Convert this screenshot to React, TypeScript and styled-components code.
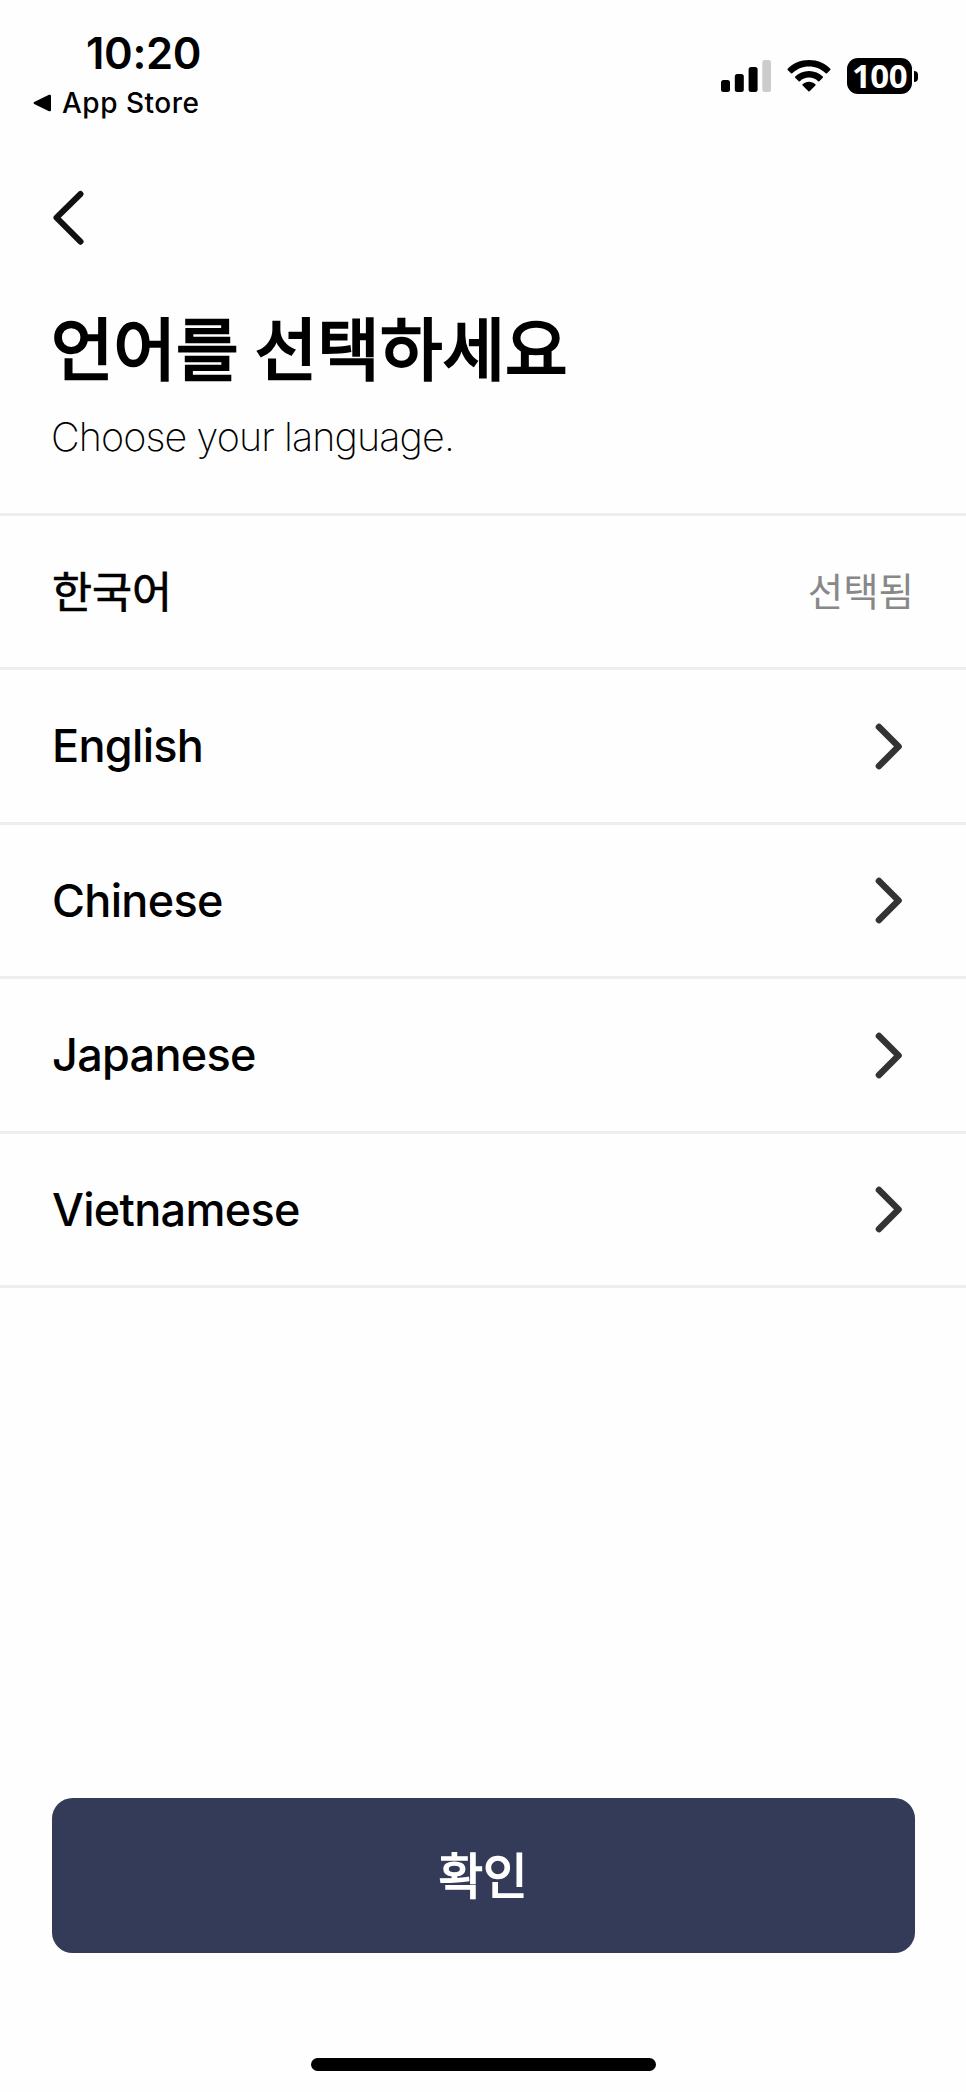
import React from "react";
import styled, { createGlobalStyle } from "styled-components";

const GlobalStyle = createGlobalStyle`
  * { box-sizing: border-box; }
  body { margin: 0; background: #fefefe; }
`;

const Screen = styled.main`
  width: 966px;
  height: 2092px;
  display: flex;
  flex-direction: column;
  background: #fefefe;
  color: #000;
  font-family: Inter, "Noto Sans CJK KR", sans-serif;
  white-space: nowrap;
  overflow: hidden;
`;

const StatusBar = styled.header`
  height: 152px;
  display: flex;
  justify-content: space-between;
  padding: 27px 48px 0 32px;
`;

const StatusLeft = styled.div`
  display: flex;
  flex-direction: column;
`;

const Clock = styled.div`
  height: 52px;
  line-height: 52px;
  padding-left: 54px;
  font-size: 43.5px;
  font-weight: 600;
  letter-spacing: -0.3px;
`;

const ReturnLink = styled.div`
  height: 48px;
  display: flex;
  align-items: center;
  gap: 10px;
  font-size: 28px;
  font-weight: 500;
  letter-spacing: 0.5px;
`;

const StatusIcons = styled.div`
  height: 36px;
  margin-top: 31px;
  display: flex;
  align-items: center;
`;

const Battery = styled.div`
  width: 65px;
  height: 36px;
  margin-left: 16px;
  border-radius: 11px;
  background: #000;
  color: #fff;
  display: flex;
  align-items: center;
  justify-content: center;
  font-family: "Open Sans", sans-serif;
  font-size: 33px;
  line-height: 36px;
  font-weight: 700;
  letter-spacing: -0.6px;
`;

const BatteryTip = styled.div`
  width: 4px;
  height: 11px;
  margin-left: 2px;
  border-radius: 0 4px 4px 0;
  background: #000;
`;

const NavBar = styled.nav`
  height: 132px;
  padding: 38px 0 0 51px;
`;

const BackButton = styled.button`
  display: block;
  padding: 0;
  border: 0;
  background: none;
  svg { display: block; }
`;

const Heading = styled.section`
  height: 228.5px;
  padding: 18px 52px 0 51px;
`;

const Title = styled.h1`
  margin: 0;
  height: 96px;
  line-height: 96px;
  font-size: 68px;
  font-weight: 400;
  word-spacing: -3px;
  -webkit-text-stroke: 2.4px #000;
`;

const Subtitle = styled.p`
  margin: 14px 0 0;
  height: 50px;
  line-height: 50px;
  font-size: 39.5px;
  font-weight: 200;
  letter-spacing: -0.9px;
`;

const LanguageList = styled.ul`
  margin: 0;
  padding: 0;
  list-style: none;
  border-top: 3px solid #eee;
`;

const LanguageRow = styled.li`
  height: 154.56px;
  padding: 0 52px;
  display: flex;
  align-items: center;
  justify-content: space-between;
  border-bottom: 3px solid #eee;
`;

const LanguageName = styled.span<{ $hangul?: boolean }>`
  padding-bottom: ${(p) => (p.$hangul ? 4 : 0)}px;
  font-size: ${(p) => (p.$hangul ? 43.5 : 45)}px;
  font-weight: ${(p) => (p.$hangul ? 400 : 500)};
  letter-spacing: ${(p) => (p.$hangul ? 0 : -0.7)}px;
  -webkit-text-stroke: ${(p) => (p.$hangul ? 0.7 : 0)}px #000;
`;

const SelectedLabel = styled.span`
  padding-bottom: 5px;
  font-size: 38.5px;
  color: #888;
`;

const RowChevron = styled.svg`
  display: block;
  margin-right: 9px;
`;

const Footer = styled.footer`
  margin-top: auto;
  height: 294px;
  padding: 0 51.5px;
  display: flex;
  flex-direction: column;
  align-items: center;
`;

const ConfirmButton = styled.button`
  width: 100%;
  height: 155px;
  padding: 0 0 6px;
  border: 0;
  border-radius: 20.6px;
  background: #333b58;
  color: #fff;
  font-family: inherit;
  font-size: 48.5px;
  font-weight: 400;
  -webkit-text-stroke: 1.6px #fff;
`;

const HomeIndicator = styled.div`
  width: 345px;
  height: 13px;
  margin-top: 105px;
  border-radius: 7px;
  background: #000;
`;

const languages = [
  { name: "한국어", selected: true },
  { name: "English" },
  { name: "Chinese" },
  { name: "Japanese" },
  { name: "Vietnamese" },
];

export default function App() {
  return (
    <Screen>
      <GlobalStyle />
      <StatusBar>
        <StatusLeft>
          <Clock>10:20</Clock>
          <ReturnLink>
            <svg width="20" height="20" viewBox="0 0 20 20">
              <path d="M2.200 9 17 1.800Q19 1.200 19 3V17Q19 18.800 17 18.200L2.200 11Q.5 10 2.200 9Z" />
            </svg>
            App Store
          </ReturnLink>
        </StatusLeft>
        <StatusIcons>
          <svg width="50" height="32" viewBox="0 0 50 32">
            <rect x="0" y="20" width="9" height="12" rx="2.5" />
            <rect x="13.8" y="14" width="9" height="18" rx="2.5" />
            <rect x="27.6" y="7" width="9" height="25" rx="2.5" />
            <rect x="41.3" y="0" width="8.700" height="32" rx="2.5" fill="#ccc" />
          </svg>
          <svg width="60" height="32" viewBox="-16 0 60 32">
            <path d="M22 0C30.500 0 38 3.300 43.300 8.700Q43.900 9.400 43.300 10L40 13.300Q39.400 13.900 38.700 13.300C34.300 9 28.500 6.500 22 6.500S9.700 9 5.300 13.300Q4.600 13.900 4 13.300L.7 10Q.1 9.400.7 8.700C6 3.300 13.500 0 22 0Z" />
            <path d="M22 11C27.500 11 32.300 13.200 35.800 16.600Q36.400 17.200 35.800 17.800L32.300 21.200Q31.700 21.700 31.100 21.200C28.700 19 25.500 17.600 22 17.600S15.300 19 12.900 21.200Q12.300 21.700 11.700 21.200L8.200 17.800Q7.600 17.200 8.200 16.600C11.700 13.200 16.500 11 22 11Z" />
            <path d="M22 21.800C24.500 21.800 26.700 22.700 28.400 24.200Q29 24.800 28.400 25.400L22.600 31.200Q22 31.800 21.400 31.200L15.600 25.400Q15 24.800 15.600 24.200C17.300 22.700 19.500 21.800 22 21.800Z" />
          </svg>
          <Battery>100</Battery>
          <BatteryTip />
        </StatusIcons>
      </StatusBar>
      <NavBar>
        <BackButton aria-label="Back">
          <svg width="34" height="56" viewBox="0 0 34 56" fill="none" stroke="#111" strokeWidth="6" strokeLinecap="round" strokeLinejoin="round">
            <path d="M29.500 4 5.500 27.700 29.500 51.700" />
          </svg>
        </BackButton>
      </NavBar>
      <Heading>
        <Title>언어를 선택하세요</Title>
        <Subtitle>Choose your language.</Subtitle>
      </Heading>
      <LanguageList>
        {languages.map(({ name, selected }) => (
          <LanguageRow key={name}>
            <LanguageName $hangul={selected}>{name}</LanguageName>
            {selected ? (
              <SelectedLabel>선택됨</SelectedLabel>
            ) : (
              <RowChevron width="30" height="48" viewBox="0 0 30 48" fill="none" stroke="#333" strokeWidth="6.6" strokeLinecap="round" strokeLinejoin="round">
                <path d="M4 5 23.500 24.500 4 44" />
              </RowChevron>
            )}
          </LanguageRow>
        ))}
      </LanguageList>
      <Footer>
        <ConfirmButton>확인</ConfirmButton>
        <HomeIndicator />
      </Footer>
    </Screen>
  );
}
